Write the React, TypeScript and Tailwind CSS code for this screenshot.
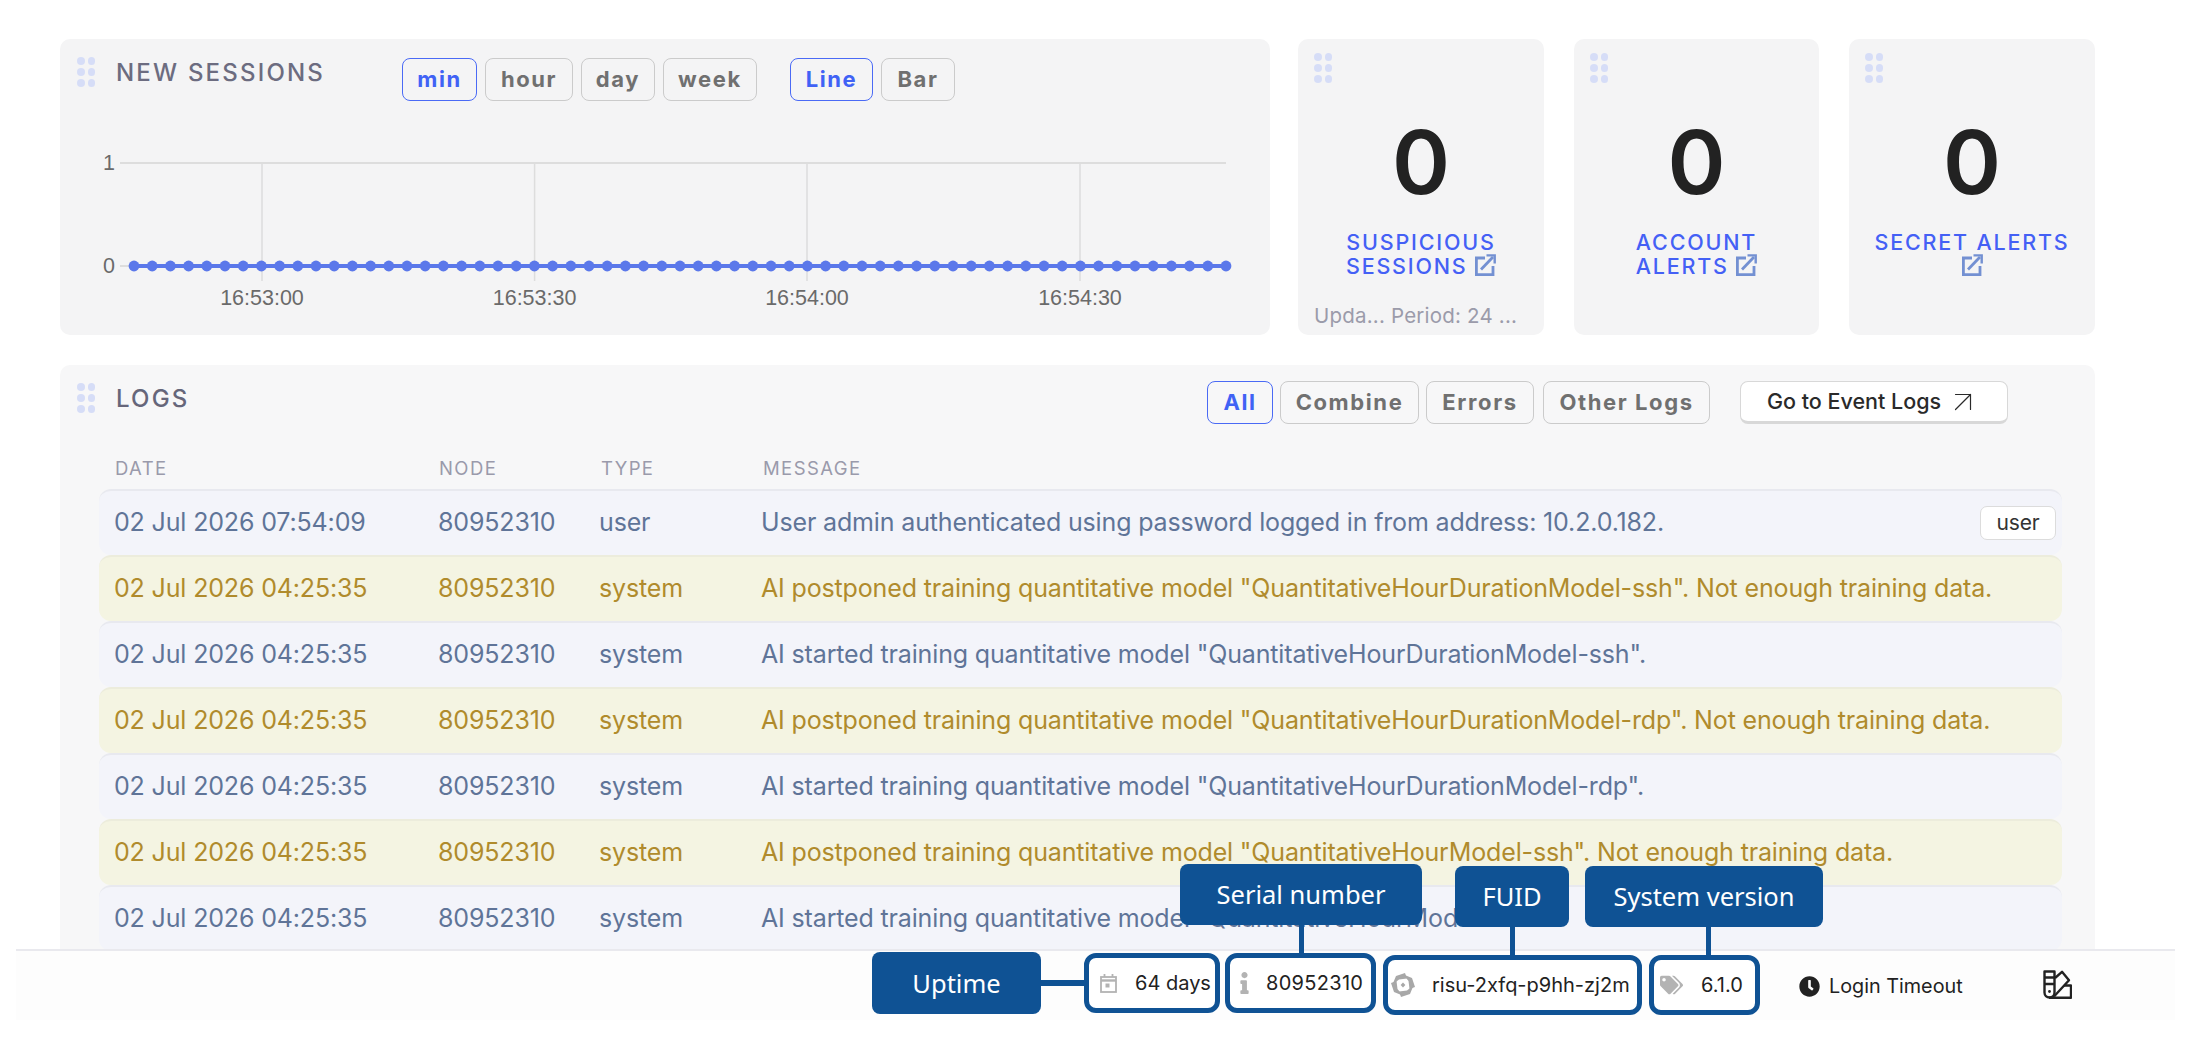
import React from 'react';
import { ArrowUpRight } from 'lucide-react';
import { FaClock, FaInfo, FaTags } from 'react-icons/fa';

const inter = 'font-["Inter",sans-serif]';

// Drag handle - 2x3 grid of pale dots
const DragDots: React.FC<{ className?: string }> = ({ className }) => (
  <div className={`grid grid-cols-2 w-[18px] gap-x-[3px] gap-y-[3px] ${className ?? ''}`}>
    {[0, 1, 2, 3, 4, 5].map((i) => (
      <span key={i} className="w-[7.5px] h-[8px] rounded-full bg-[#d6ddf7]" />
    ))}
  </div>
);

const Pill: React.FC<{ label: string; active?: boolean; className?: string }> = ({ label, active, className }) => (
  <button
    className={`h-[43px] rounded-[8px] border-[1.5px] text-[22px] font-bold tracking-[1.6px] ${
      active ? 'border-[#4a6af5] text-[#4062f5]' : 'border-[#cbcbcb] text-[#707070]'
    } ${className ?? ''}`}
  >
    {label}
  </button>
);

const ExternalIcon: React.FC<{ className?: string }> = ({ className }) => (
  <svg viewBox="0 0 21 22" className={`w-[21px] h-[22px] ${className ?? ''}`} fill="none" stroke="#7390d2" strokeWidth="2.8">
    <path d="M10 4H1.4v16.6H18V12" />
    <path d="M6 15.5 18 3" />
    <path d="M11.5 1.4h8.2v8.2" strokeWidth="2.4" />
  </svg>
);

const StatCard: React.FC<{ lines: React.ReactNode; footer?: string; className: string }> = ({ lines, footer, className }) => (
  <div className={`relative h-[296px] rounded-[10px] bg-[#f4f4f5] pt-[14px] ${className}`}>
    <DragDots className="ml-[16px]" />
    <div className="mt-[29px] text-center text-[88px] leading-[100px] font-semibold text-[#222222]">0</div>
    <div className="mt-[18px] px-[10px] text-center text-[21.5px] leading-[24px] font-medium tracking-[1.8px] text-[#4460f5]">
      {lines}
    </div>
    {footer && (
      <div className="absolute left-[16px] bottom-[7px] text-[20.5px] leading-[24px] tracking-[0.2px] text-[#9b9baa] whitespace-nowrap">
        {footer}
      </div>
    )}
  </div>
);

const ChartCard: React.FC = () => {
  const points = Array.from({ length: 61 }, (_, i) => 74 + i * 18.2);
  const ticks: [number, string][] = [
    [202, '16:53:00'],
    [474.6, '16:53:30'],
    [747, '16:54:00'],
    [1020, '16:54:30'],
  ];
  return (
    <div className="w-[1210px] h-[296px] rounded-[10px] bg-[#f4f4f5] pl-[17px] pt-[19px]">
      <div className="flex items-start h-[43px]">
        <DragDots className="mt-[-1px]" />
        <h2 className="ml-[21px] mt-[-3px] w-[286px] text-[24px] leading-[36px] font-medium tracking-[2.2px] text-[#6c6c80]">NEW SESSIONS</h2>
        <div className="flex gap-[8px]">
          <Pill label="min" active className="w-[75px]" />
          <Pill label="hour" className="w-[88px]" />
          <Pill label="day" className="w-[74px]" />
          <Pill label="week" className="w-[94px]" />
          <Pill label="Line" active className="w-[83px] ml-[25px]" />
          <Pill label="Bar" className="w-[74px]" />
        </div>
      </div>
      {/* Line chart, coordinates are relative to the card */}
      <svg width="1193" height="234" viewBox="17 62 1193 234" className="block">
        <line x1="60" x2="1166" y1="124" y2="124" stroke="#dddddd" strokeWidth="2" />
        <line x1="60" x2="1166" y1="227" y2="227" stroke="#dddddd" strokeWidth="2" />
        {ticks.map(([x]) => (
          <line key={x} x1={x} x2={x} y1="124" y2="242" stroke="#dddddd" strokeWidth="1.5" />
        ))}
        <line x1="74" x2="1166" y1="227" y2="227" stroke="#5b78ea" strokeWidth="4" />
        {points.map((x) => (
          <circle key={x} cx={x} cy="227" r="5.4" fill="#5b78ea" />
        ))}
        <g fontFamily="'Liberation Sans', sans-serif" fontSize="21.5" fill="#6a6a6a">
          <text x="55" y="131" textAnchor="end">1</text>
          <text x="55" y="234" textAnchor="end">0</text>
          {ticks.map(([x, label]) => (
            <text key={label} x={x} y="266" textAnchor="middle">{label}</text>
          ))}
        </g>
      </svg>
    </div>
  );
};

type LogRow = { date: string; type: string; message: string; warn?: boolean; badge?: string };

const rows: LogRow[] = [
  { date: '02 Jul 2026 07:54:09', type: 'user', message: 'User admin authenticated using password logged in from address: 10.2.0.182.', badge: 'user' },
  { date: '02 Jul 2026 04:25:35', type: 'system', warn: true, message: 'AI postponed training quantitative model "QuantitativeHourDurationModel-ssh". Not enough training data.' },
  { date: '02 Jul 2026 04:25:35', type: 'system', message: 'AI started training quantitative model "QuantitativeHourDurationModel-ssh".' },
  { date: '02 Jul 2026 04:25:35', type: 'system', warn: true, message: 'AI postponed training quantitative model "QuantitativeHourDurationModel-rdp". Not enough training data.' },
  { date: '02 Jul 2026 04:25:35', type: 'system', message: 'AI started training quantitative model "QuantitativeHourDurationModel-rdp".' },
  { date: '02 Jul 2026 04:25:35', type: 'system', warn: true, message: 'AI postponed training quantitative model "QuantitativeHourModel-ssh". Not enough training data.' },
  { date: '02 Jul 2026 04:25:35', type: 'system', message: 'AI started training quantitative model "QuantitativeHourModel-ssh".' },
];

const LogsPanel: React.FC = () => (
  <div className="mt-[30px] w-[2035px] h-[600px] rounded-t-[10px] bg-[#f7f7f8] pt-[16px]">
    <div className="flex items-start h-[43px] pl-[17px]">
      <DragDots className="mt-[2px]" />
      <h2 className="ml-[21px] w-[1091px] text-[24px] leading-[36px] font-medium tracking-[2.2px] text-[#66667a]">LOGS</h2>
      <div className="flex gap-[7px]">
        <Pill label="All" active className="w-[66px]" />
        <Pill label="Combine" className="w-[139px]" />
        <Pill label="Errors" className="w-[108px]" />
        <Pill label="Other Logs" className="w-[167px] ml-[2px]" />
      </div>
      <button className="ml-[30px] flex h-[43px] w-[268px] items-center justify-center gap-[4px] rounded-[8px] border-[1.5px] border-b-[3px] border-[#d8d8d8] bg-white text-[21.5px] font-medium text-[#2a2a2a]">
        Go to Event Logs
        <ArrowUpRight size={36} strokeWidth={0.8} className="-my-[4px]" />
      </button>
    </div>
    <div className="mt-[35px] flex h-[20px] items-center pl-[55px] text-[18.5px] tracking-[1.4px] text-[#9a9aab]">
      <span className="w-[324px]">DATE</span>
      <span className="w-[162px]">NODE</span>
      <span className="w-[162px]">TYPE</span>
      <span>MESSAGE</span>
    </div>
    <div className="mt-[10px] ml-[39px] w-[1963px]">
      {rows.map((row, i) => (
        <div
          key={i}
          className={`flex h-[66px] items-center rounded-[12px] border-t-2 pl-[15px] pr-[4px] text-[25px] tracking-[-0.15px] ${
            row.warn ? 'border-[#ececdc] bg-[#f4f4e2] text-[#b08b2c]' : 'border-[#e8e9ef] bg-[#f3f4fa] text-[#5f7498]'
          }`}
        >
          <span className="w-[324px] shrink-0">{row.date}</span>
          <span className="w-[161px] shrink-0">80952310</span>
          <span className="w-[162px] shrink-0">{row.type}</span>
          <span className="flex-1 whitespace-nowrap">{row.message}</span>
          {row.badge && (
            <span className="mr-[2px] flex h-[34px] w-[76px] items-center justify-center rounded-[7px] border-[1.5px] border-[#dcdcdc] bg-white text-[21px] text-[#333333]">
              {row.badge}
            </span>
          )}
        </div>
      ))}
    </div>
  </div>
);

// Blue annotation label above / beside a footer item
const Callout: React.FC<{ label: string; className: string }> = ({ label, className }) => (
  <div className={`absolute flex items-center justify-center rounded-[8px] bg-[#0f5294] text-[25.5px] text-white font-["Noto_Sans",sans-serif] whitespace-nowrap ${className}`}>
    {label}
  </div>
);

const Outlined: React.FC<{ className: string; children: React.ReactNode }> = ({ className, children }) => (
  <div className={`relative flex h-[60px] items-center rounded-[12px] border-[5px] border-[#0f5294] bg-white text-[20px] text-[#222222] ${className}`}>
    {children}
  </div>
);

const Footer: React.FC = () => (
  <div className="mx-[16px] flex h-[71px] w-[2159px] items-start border-t-2 border-[#e9e9ee] bg-[#fdfdfd] pl-[1068px] pt-[2px]">
    <Outlined className="w-[136px]">
      {/* Uptime */}
      <Callout label="Uptime" className="left-[-217px] top-[-6px] h-[62px] w-[169px]" />
      <span className="absolute left-[-48px] top-[22px] h-[6px] w-[48px] bg-[#0f5294]" />
      <svg viewBox="0 0 17 19" className="ml-[11px] h-[19px] w-[17px]" fill="none" stroke="#b3b3b3" strokeWidth="1.8">
        <rect x="1" y="3" width="15" height="15" />
        <path d="M1 6.5h15" strokeWidth="2.4" />
        <path d="M4.5 0v3M12.5 0v3" />
        <rect x="5.5" y="9.5" width="4" height="4" fill="#b3b3b3" stroke="none" />
      </svg>
      <span className="ml-[18px] whitespace-nowrap">64 days</span>
    </Outlined>
    <Outlined className="ml-[5px] w-[151px]">
      <Callout label="Serial number" className="left-[-50px] top-[-94px] h-[61px] w-[242px]" />
      <span className="absolute left-[69px] top-[-33px] h-[33px] w-[5px] bg-[#0f5294]" />
      <FaInfo className="ml-[10px] h-[22px] w-[9px] text-[#b3b3b3]" />
      <span className="ml-[17px] tracking-[0.3px]">80952310</span>
    </Outlined>
    <Outlined className="ml-[7px] mt-[2px] w-[259px]">
      <Callout label="FUID" className="left-[67px] top-[-94px] h-[61px] w-[114px]" />
      <span className="absolute left-[122px] top-[-33px] h-[33px] w-[5px] bg-[#0f5294]" />
      {/* pinwheel logo: one blade turned four times */}
      <svg viewBox="0 0 24 24" className="ml-[3px] h-[24px] w-[24px]" fill="#a8a8a8">
        {[0, 90, 180, 270].map((deg) => (
          <path key={deg} transform={`rotate(${deg} 12 12)`} d="M14 0 5 3 1.5 11.5 5.5 8.5 8 6.5 16 5.5Z" />
        ))}
        <path d="M12 9.6 14.4 12 12 14.4 9.6 12Z" />
      </svg>
      <span className="ml-[17px] whitespace-nowrap">risu-2xfq-p9hh-zj2m</span>
    </Outlined>
    <Outlined className="ml-[7px] mt-[2px] w-[111px]">
      <Callout label="System version" className="left-[-69px] top-[-94px] h-[61px] w-[238px]" />
      <span className="absolute left-[52px] top-[-33px] h-[33px] w-[5px] bg-[#0f5294]" />
      <FaTags className="ml-[6px] h-[20px] w-[23px] text-[#b3b3b3]" />
      <span className="ml-[18px]">6.1.0</span>
    </Outlined>
    <div className="ml-[39px] mt-[19px] flex items-center gap-[9px] text-[19.8px] text-[#222222] whitespace-nowrap">
      <FaClock className="h-[21px] w-[21px]" />
      Login Timeout
    </div>
    <svg viewBox="0 0 29 29" className="ml-[80px] mt-[17px] h-[29px] w-[29px]" fill="none" stroke="#222222" strokeWidth="2.4" strokeLinejoin="round">
      <path d="M1.5 1.5h10v21a5 5 0 0 1-10 0Z" />
      <path d="M1.5 7.5h10M1.5 14h10" />
      <circle cx="6.5" cy="21.5" r="1.4" fill="#222222" stroke="none" />
      <path d="M12 8 19 1.8l7 8.4L11 26.5" />
      <path d="M21 15.5h7v12.3H6" />
    </svg>
  </div>
);

export default function App() {
  return (
    <div className={`h-[1045px] w-[2191px] overflow-hidden bg-white ${inter}`}>
      <div className="h-[949px] overflow-hidden pl-[60px] pt-[39px]">
        <div className="flex">
          <ChartCard />
          <StatCard
            className="ml-[28px] w-[246px]"
            footer="Upda... Period: 24 ..."
            lines={<>SUSPICIOUS<br />SESSIONS <ExternalIcon className="inline align-[-2px]" /></>}
          />
          <StatCard
            className="ml-[30px] w-[245px]"
            lines={<>ACCOUNT<br />ALERTS <ExternalIcon className="inline align-[-2px]" /></>}
          />
          <StatCard
            className="ml-[30px] w-[246px]"
            lines={<>SECRET ALERTS<br /><ExternalIcon className="inline align-[-2px]" /></>}
          />
        </div>
        <LogsPanel />
      </div>
      <Footer />
    </div>
  );
}
